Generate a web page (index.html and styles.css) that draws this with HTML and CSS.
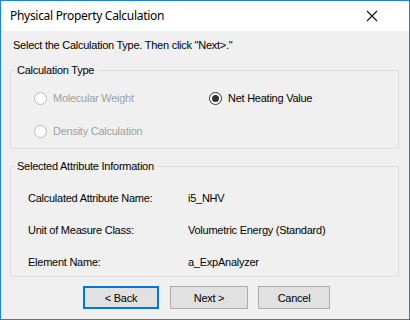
FILE: index.html
```html
<!DOCTYPE html>
<html lang="en">
<head>
    <meta charset="UTF-8">
    <title>Physical Property Calculation</title>
    <link rel="stylesheet" href="styles.css">
</head>
<body>
    <div class="janela">
        <div class="titulo">
            <span class="titulo-texto">Physical Property Calculation</span>
            <svg class="fechar" width="12" height="12" viewBox="0 0 12 12">
                <path d="M1 1 L11 11 M11 1 L1 11" stroke="#111" stroke-width="1.1" fill="none"/>
            </svg>
        </div>

        <div class="conteudo">
            <p class="instrucao">Select the Calculation Type. Then click "Next&gt;."</p>

            <fieldset class="grupo grupo-tipo">
                <legend>Calculation Type</legend>
                <div class="opcoes">
                    <label class="opcao desabilitada"><span class="radio"></span>Molecular Weight</label>
                    <label class="opcao"><span class="radio marcado"></span>Net Heating Value</label>
                    <label class="opcao desabilitada"><span class="radio"></span>Density Calculation</label>
                </div>
            </fieldset>

            <fieldset class="grupo grupo-info">
                <legend>Selected Attribute Information</legend>
                <div class="info">
                    <span>Calculated Attribute Name:</span><span>i5_NHV</span>
                    <span>Unit of Measure Class:</span><span>Volumetric Energy (Standard)</span>
                    <span>Element Name:</span><span>a_ExpAnalyzer</span>
                </div>
            </fieldset>

            <div class="botoes">
                <button class="botao voltar">&lt; Back</button>
                <button class="botao proximo">Next &gt;</button>
                <button class="botao cancelar">Cancel</button>
            </div>
        </div>
    </div>
</body>
</html>
```
FILE: styles.css
```css
body {
    margin: 0;
    padding: 0;
    background: #f0f0f0;
    font-family: "Liberation Sans", Arial, sans-serif;
    font-size: 11px;
    letter-spacing: -0.25px;
    color: #000;
}

.janela {
    box-sizing: border-box;
    width: 410px;
    height: 320px;
    border: 1px solid #1883d7;
    background: #f0f0f0;
    display: flex;
    flex-direction: column;
}

.titulo {
    height: 30px;
    background: #ffffff;
    display: flex;
    align-items: center;
    justify-content: space-between;
    padding: 0 31px 0 9px;
}

.titulo-texto {
    font-family: "Noto Sans", "Open Sans", sans-serif;
    font-size: 12px;
    letter-spacing: -0.3px;
    color: #000;
    margin-top: -1px;
}

.fechar {
    margin-top: -1px;
}

.conteudo {
    padding: 7px 10px 0 9px;
}

.instrucao {
    margin: 0 0 11px 3px;
    line-height: 14px;
    color: #000;
}

.grupo {
    margin: 0;
    padding: 0 0 7px 0;
    border: 1px solid #dcdcdc;
    border-radius: 2px;
    min-width: 0;
}

.grupo legend {
    line-height: 14px;
    padding: 0 3px 0 2px;
    margin-left: 4px;
    color: #000;
}

.grupo-info {
    margin-top: 10px;
}

/* opcoes de calculo */
.opcoes {
    display: grid;
    grid-template-columns: 175px auto;
    row-gap: 13px;
    padding: 11px 0 0 23px;
}

.opcao {
    display: flex;
    align-items: center;
    height: 20px;
    line-height: 14px;
}

.opcao.desabilitada {
    color: #a0a0a0;
}

.radio {
    box-sizing: border-box;
    width: 13px;
    height: 13px;
    border: 1px solid #bcbcbc;
    border-radius: 50%;
    background: #fff;
    margin-right: 6px;
    display: flex;
    align-items: center;
    justify-content: center;
}

.radio.marcado {
    border-color: #333;
}

.radio.marcado::after {
    content: '';
    width: 7px;
    height: 7px;
    border-radius: 50%;
    background: #333;
}

/* informacoes do atributo */
.info {
    display: grid;
    grid-template-columns: 160px auto;
    row-gap: 18px;
    padding: 18px 0 0 17px;
    line-height: 14px;
}

.botoes {
    display: flex;
    padding: 9px 0 0 73px;
    gap: 11px;
}

.botao {
    box-sizing: border-box;
    height: 23px;
    background: #e1e1e1;
    border: 1px solid #adadad;
    font-family: "Liberation Sans", Arial, sans-serif;
    font-size: 11px;
    letter-spacing: -0.25px;
    color: #000;
    padding: 0;
}

.voltar {
    width: 76px;
    border: 2px solid #0078d7;
}

.proximo {
    width: 78px;
}

.cancelar {
    width: 72px;
    margin-left: -1px;
}
```
